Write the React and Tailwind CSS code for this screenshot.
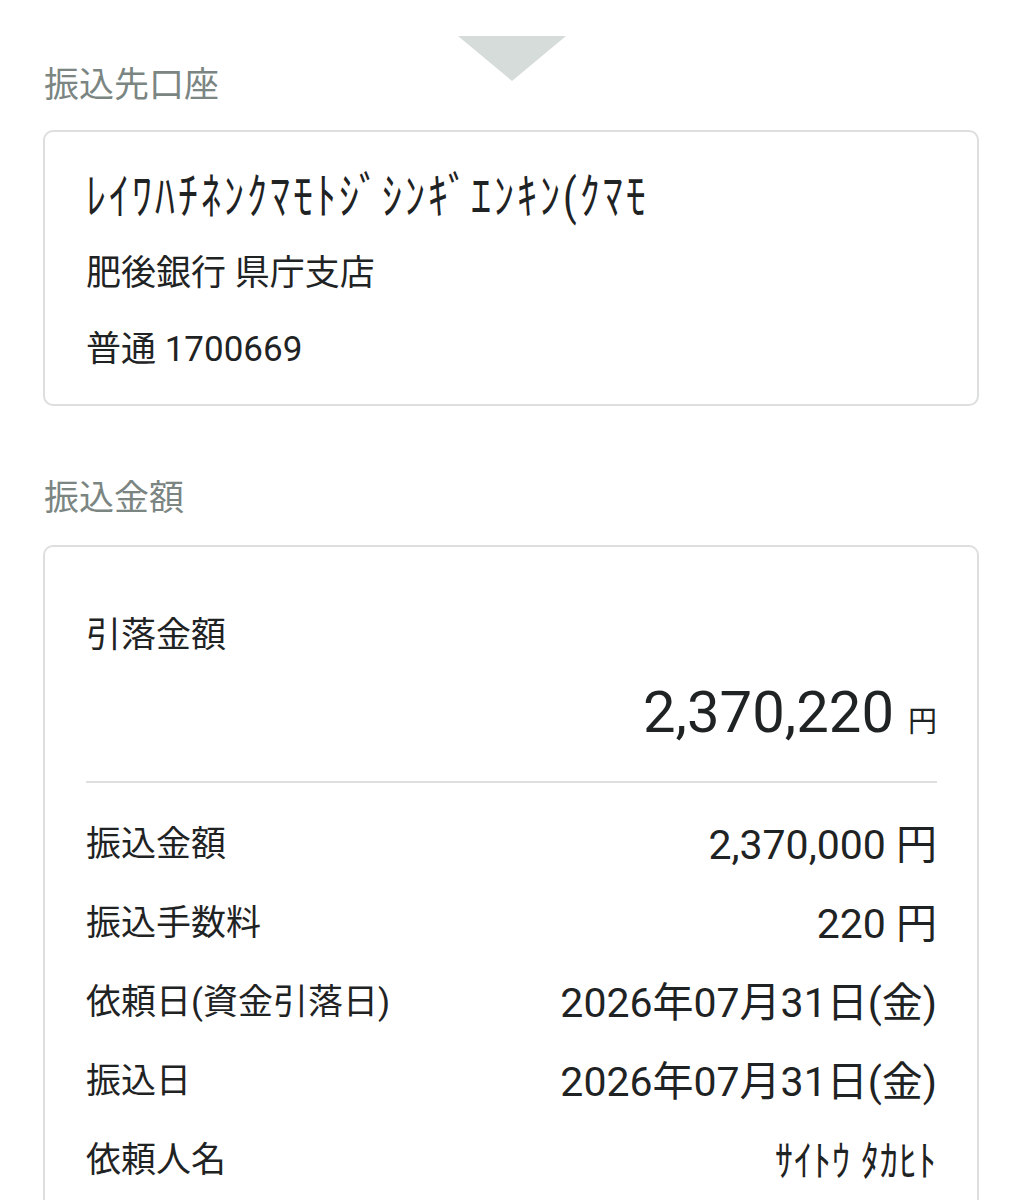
export default function App() {
  const font = { fontFamily: "Roboto, 'Noto Sans CJK JP', sans-serif" };
  const rows = [
    ["振込金額", "2,370,000 円"],
    ["振込手数料", "220 円"],
    ["依頼日(資金引落日)", "2026年07月31日(金)"],
    ["振込日", "2026年07月31日(金)"],
  ];
  return (
    <div className="w-[1023px] h-[1200px] overflow-hidden bg-white text-[#1f2324]" style={font}>
      <div className="flex justify-center pt-[36px]">
        <svg width="108" height="45" viewBox="0 0 108 45">
          <polygon points="0,0 108,0 54,45" fill="#d5dcda" />
        </svg>
      </div>
      <div className="px-[43px]">
        <div className="text-[35px] leading-[50px] text-[#7b8582] mt-[-20px] pl-[1px]">振込先口座</div>
        <div className="mt-[19px] w-[936px] rounded-[10px] border-2 border-[#dddfdf] pl-[41px] pr-[40px] pt-[28px] pb-[16px]">
          <div className="text-[40px] leading-[76px] tracking-[3px]">
            <span className="inline-block origin-center scale-y-[1.25]">ﾚｲﾜﾊﾁﾈﾝｸﾏﾓﾄｼﾞｼﾝｷﾞｴﾝｷﾝ(ｸﾏﾓ</span>
          </div>
          <div className="text-[35px] leading-[76px]">肥後銀行 県庁支店</div>
          <div className="text-[35px] leading-[76px]">普通 1700669</div>
        </div>
        <div className="mt-[68px] text-[35px] leading-[50px] text-[#7b8582] pl-[1px]">振込金額</div>
        <div className="mt-[21px] w-[936px] rounded-t-[10px] border-2 border-b-0 border-[#dddfdf] pl-[41px] pr-[40px] pt-[59px]">
          <div className="text-[35px] leading-[60px]">引落金額</div>
          <div className="mt-[6px] flex justify-end items-baseline h-[80px] leading-[80px]">
            <span className="text-[58px]">2,370,220</span>
            <span className="text-[29px] ml-[14px]">円</span>
          </div>
          <div className="mt-[29px] h-[2px] bg-[#dde0df]" />
          <div className="mt-[23px]">
            {rows.map(([l, v]) => (
              <div key={l} className="flex justify-between items-center h-[79px]">
                <span className="text-[35px]">{l}</span>
                <span className="text-[41px]">{v}</span>
              </div>
            ))}
            <div className="flex justify-between items-center h-[79px]">
              <span className="text-[35px]">依頼人名</span>
              <span className="text-[36px] tracking-[1px] inline-block scale-y-[1.18]">ｻｲﾄｳ ﾀｶﾋﾄ</span>
            </div>
          </div>
        </div>
      </div>
    </div>
  );
}
